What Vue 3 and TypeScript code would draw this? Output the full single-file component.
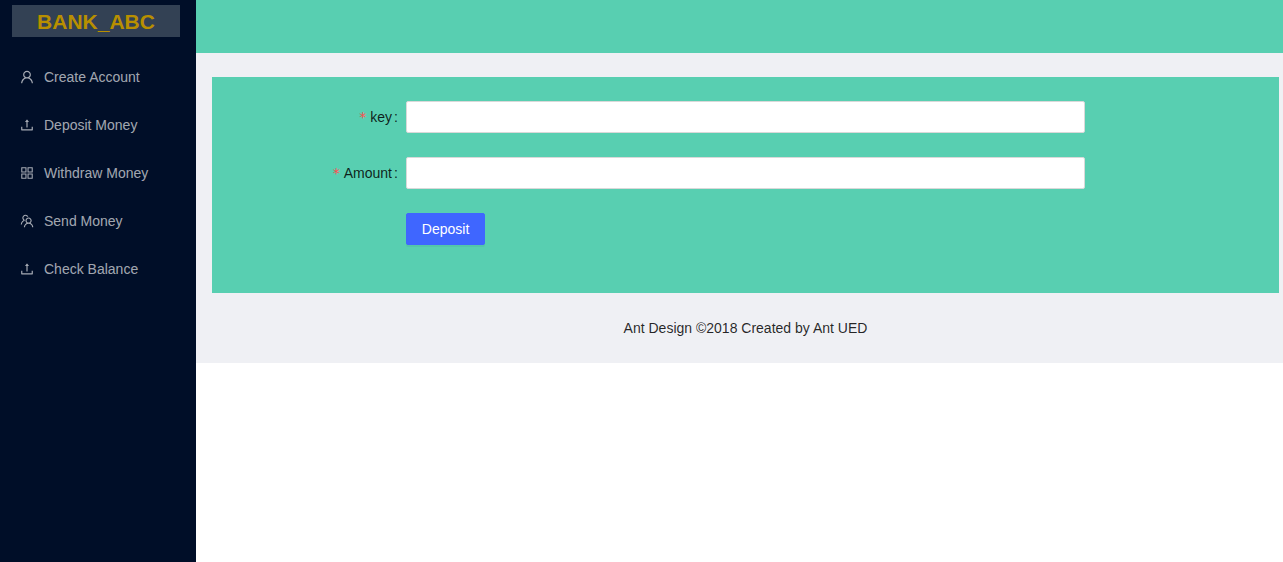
<script setup lang="ts">
import { ref } from 'vue'

interface MenuEntry {
  label: string
  icon: string
}

const icons: Record<string, string> = {
  user: 'M858.5 763.6a374 374 0 0 0-80.6-119.5 375.63 375.63 0 0 0-119.5-80.6c-.4-.2-.8-.3-1.2-.5C719.5 518 760 444.7 760 362c0-137-111-248-248-248S264 225 264 362c0 82.7 40.5 156 102.8 201.1-.4.2-.8.3-1.2.5-44.8 18.9-85 46-119.5 80.6a375.63 375.63 0 0 0-80.6 119.5A371.7 371.7 0 0 0 136 901.8a8 8 0 0 0 8 8.2h60c4.4 0 7.9-3.5 8-7.8 2-77.2 33-149.5 87.8-204.3 56.7-56.7 132-87.9 212.2-87.9s155.5 31.2 212.2 87.9C779 752.7 810 825 812 902.2c.1 4.4 3.6 7.8 8 7.8h60a8 8 0 0 0 8-8.2c-1-47.8-10.9-94.3-29.5-138.2zM512 534c-45.9 0-89.1-17.9-121.6-50.4S340 407.9 340 362c0-45.9 17.9-89.1 50.4-121.6S466.1 190 512 190s89.1 17.9 121.6 50.4S684 316.1 684 362c0 45.9-17.9 89.1-50.4 121.6S557.9 534 512 534z',
  upload: 'M400 317.7h73.9V656c0 4.4 3.6 8 8 8h60c4.4 0 8-3.6 8-8V317.7H624c6.7 0 10.4-7.7 6.3-12.9L518.3 163a8 8 0 0 0-12.6 0l-112 141.7c-4.1 5.3-.4 13 6.3 13zM878 626h-60c-4.4 0-8 3.6-8 8v154H214V634c0-4.4-3.6-8-8-8h-60c-4.4 0-8 3.6-8 8v198c0 17.7 14.3 32 32 32h684c17.7 0 32-14.3 32-32V634c0-4.4-3.6-8-8-8z',
  grid: 'M464 144H160c-8.8 0-16 7.2-16 16v304c0 8.8 7.2 16 16 16h304c8.8 0 16-7.2 16-16V160c0-8.8-7.2-16-16-16zm-52 268H212V212h200v200zm452-268H560c-8.8 0-16 7.2-16 16v304c0 8.8 7.2 16 16 16h304c8.8 0 16-7.2 16-16V160c0-8.8-7.2-16-16-16zm-52 268H612V212h200v200zM464 544H160c-8.8 0-16 7.2-16 16v304c0 8.8 7.2 16 16 16h304c8.8 0 16-7.2 16-16V560c0-8.8-7.2-16-16-16zm-52 268H212V612h200v200zm452-268H560c-8.8 0-16 7.2-16 16v304c0 8.8 7.2 16 16 16h304c8.8 0 16-7.2 16-16V560c0-8.8-7.2-16-16-16zm-52 268H612V612h200v200z',
  team: 'M824.2 699.9a301.55 301.55 0 0 0-86.4-60.4C783.1 602.8 812 546.8 812 484c0-110.8-92.4-201.7-203.2-200-109.1 1.7-197 90.6-197 200 0 62.8 29 118.8 74.2 155.5a300.95 300.95 0 0 0-86.4 60.4C345 754.6 314 826.8 312 903.8a8 8 0 0 0 8 8.2h56c4.3 0 7.9-3.4 8-7.7 1.9-58 25.4-112.3 66.7-153.5A226.62 226.62 0 0 1 612 684c60.9 0 118.2 23.7 161.3 66.8C814.6 792 838 846.3 840 904.3c.1 4.3 3.7 7.7 8 7.7h56a8 8 0 0 0 8-8.2c-2-77-33-149.2-87.8-203.9zM612 612c-34.2 0-66.4-13.3-90.5-37.5a126.86 126.86 0 0 1-37.5-91.8c.3-32.8 13.4-64.5 36.3-88 24-24.6 56.1-38.3 90.4-38.7 33.9-.3 66.8 12.9 91 36.6 24.8 24.3 38.4 56.8 38.4 91.4 0 34.2-13.3 66.3-37.5 90.5A127.3 127.3 0 0 1 612 612zM361.5 510.4c-.9-8.7-1.4-17.5-1.4-26.4 0-15.9 1.5-31.4 4.3-46.5.7-3.6-1.2-7.3-4.5-8.8-13.6-6.1-26.1-14.5-36.9-25.1a127.54 127.54 0 0 1-38.7-95.4c.9-32.1 13.8-62.6 36.3-85.6 24.7-25.3 57.9-39.1 93.2-38.7 31.9.3 62.7 12.6 86 34.4 7.9 7.4 14.7 15.6 20.4 24.4 2 3.1 5.9 4.4 9.3 3.2 17.6-6.1 36.2-10.4 55.3-12.4 5.6-.6 8.8-6.6 6.3-11.6-32.5-64.3-98.9-108.7-175.7-109.9-110.9-1.7-203.3 89.2-203.3 199.9 0 62.8 28.9 118.8 74.2 155.5-31.8 14.7-61.1 35-86.5 60.4-54.8 54.7-85.8 126.9-87.8 204a8 8 0 0 0 8 8.2h56.1c4.3 0 7.9-3.4 8-7.7 1.9-58 25.4-112.3 66.7-153.5 29.4-29.4 65.4-49.8 104.7-59.7 3.9-1 6.5-4.7 6-8.7z',
}

const menu: MenuEntry[] = [
  { label: 'Create Account', icon: 'user' },
  { label: 'Deposit Money', icon: 'upload' },
  { label: 'Withdraw Money', icon: 'grid' },
  { label: 'Send Money', icon: 'team' },
  { label: 'Check Balance', icon: 'upload' },
]

const accountKey = ref('')
const amount = ref('')
</script>

<template>
  <div class="layout">
    <aside class="sider">
      <div class="logo">BANK_ABC</div>
      <nav class="menu">
        <a v-for="item in menu" :key="item.label" class="menu-item" href="#">
          <svg class="icon" viewBox="64 64 896 896" aria-hidden="true">
            <path :d="icons[item.icon]" />
          </svg>
          <span>{{ item.label }}</span>
        </a>
      </nav>
    </aside>
    <div class="body">
      <header class="header"></header>
      <div class="page">
        <main class="content">
          <form class="form" @submit.prevent>
            <div class="row">
              <label class="label" for="key"><span class="required">*</span>key<span class="colon">:</span></label>
              <input id="key" v-model="accountKey" class="input" type="text" required />
            </div>
            <div class="row">
              <label class="label" for="amount"><span class="required">*</span>Amount<span class="colon">:</span></label>
              <input id="amount" v-model="amount" class="input" type="text" required />
            </div>
            <div class="row">
              <button class="submit" type="submit">Deposit</button>
            </div>
          </form>
        </main>
        <footer class="footer">Ant Design ©2018 Created by Ant UED</footer>
      </div>
    </div>
  </div>
</template>

<style>
body {
  margin: 0;
  background: #fff;
}
</style>

<style scoped>
.layout {
  display: flex;
  align-items: flex-start;
  min-height: 100vh;
  font-family: "Liberation Sans", Arial, sans-serif;
  font-size: 14px;
  line-height: 22px;
  color: rgba(0, 0, 0, 0.85);
}

.layout * {
  box-sizing: border-box;
}

.sider {
  flex: 0 0 196px;
  align-self: stretch;
  padding-top: 5px;
  background: #000e28;
}

.logo {
  height: 32px;
  margin: 0 16px 16px 12px;
  background: #334154;
  color: #b88f00;
  font-size: 21px;
  font-weight: 700;
  line-height: 34px;
  text-align: center;
}

.menu {
  display: flex;
  flex-direction: column;
  gap: 8px;
  padding-top: 4px;
}

.menu-item {
  display: flex;
  align-items: center;
  gap: 10px;
  height: 40px;
  padding: 0 16px 0 20px;
  color: rgba(255, 255, 255, 0.65);
  text-decoration: none;
}

.icon {
  width: 14px;
  height: 14px;
  fill: currentColor;
}

.body {
  flex: 1;
  min-width: 0;
  background: #eff0f4;
}

.header {
  height: 53px;
  background: #58cfb1;
}

.page {
  padding: 24px 4px 0 16px;
}

.content {
  padding: 24px;
  background: #58cfb1;
}

.row {
  display: grid;
  grid-template-columns: 4fr 16fr 4fr;
  align-items: center;
  height: 32px;
  margin-bottom: 24px;
}

.label {
  text-align: right;
  white-space: nowrap;
}

.required {
  margin-right: 4px;
  color: #ff4d4f;
  font-family: "DejaVu Sans", sans-serif;
  line-height: 14px;
}

.colon {
  margin: 0 8px 0 2px;
}

.input {
  width: 100%;
  height: 32px;
  padding: 4px 11px;
  border: 1px solid #d9d9d9;
  border-radius: 2px;
  background: #fff;
  color: inherit;
  font: inherit;
  outline: none;
}

.input:focus,
.submit:focus-visible {
  border-color: #6b8cff;
}

.submit {
  grid-column: 2;
  justify-self: start;
  height: 32px;
  padding: 0 15px;
  border: 1px solid #3f66ff;
  border-radius: 2px;
  background: #3f66ff;
  box-shadow: 0 2px 0 rgba(0, 0, 0, 0.045);
  color: #fff;
  font: inherit;
  cursor: pointer;
}

.footer {
  padding: 24px 16px;
  text-align: center;
}
</style>
